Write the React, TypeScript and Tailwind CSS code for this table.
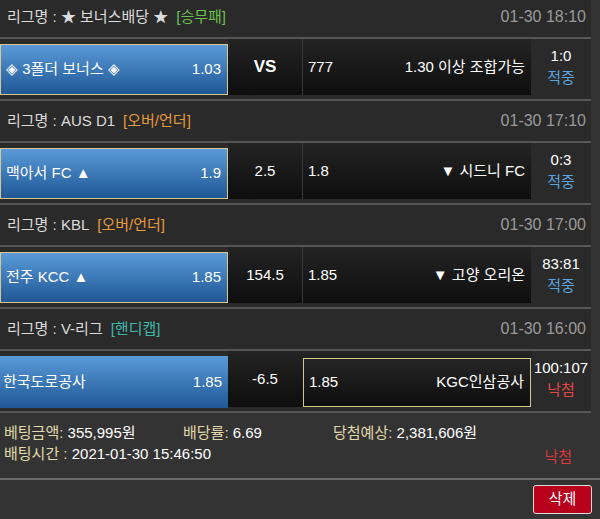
import React from "react";

type Match = {
  league: string;
  tag: string;
  tagColor: string;
  date: string;
  home: string;
  homeOdds: string;
  mid: string;
  midBold?: boolean;
  awayOdds: string;
  away: string;
  score: string;
  result: string;
  win: boolean;
  pick: "home" | "away";
};

const matches: Match[] = [
  {
    league: "★ 보너스배당 ★",
    tag: "[승무패]",
    tagColor: "text-[#6cc04a]",
    date: "01-30 18:10",
    home: "◈ 3폴더 보너스 ◈",
    homeOdds: "1.03",
    mid: "VS",
    midBold: true,
    awayOdds: "777",
    away: "1.30 이상 조합가능",
    score: "1:0",
    result: "적중",
    win: true,
    pick: "home",
  },
  {
    league: "AUS D1",
    tag: "[오버/언더]",
    tagColor: "text-[#e79a3c]",
    date: "01-30 17:10",
    home: "맥아서 FC ▲",
    homeOdds: "1.9",
    mid: "2.5",
    awayOdds: "1.8",
    away: "▼ 시드니 FC",
    score: "0:3",
    result: "적중",
    win: true,
    pick: "home",
  },
  {
    league: "KBL",
    tag: "[오버/언더]",
    tagColor: "text-[#e79a3c]",
    date: "01-30 17:00",
    home: "전주 KCC ▲",
    homeOdds: "1.85",
    mid: "154.5",
    awayOdds: "1.85",
    away: "▼ 고양 오리온",
    score: "83:81",
    result: "적중",
    win: true,
    pick: "home",
  },
  {
    league: "V-리그",
    tag: "[핸디캡]",
    tagColor: "text-[#3fb8ac]",
    date: "01-30 16:00",
    home: "한국도로공사",
    homeOdds: "1.85",
    mid: "-6.5",
    awayOdds: "1.85",
    away: "KGC인삼공사",
    score: "100:107",
    result: "낙첨",
    win: false,
    pick: "away",
  },
];

function Section({ m }: { m: Match }) {
  const homePicked = m.pick === "home";
  return (
    <div className="w-[591px] bg-[#2a2a2a] border-t-2 border-[#565656]">
      <div className="h-[42px] flex items-center justify-between pl-[7px] pr-[5px] border-b-2 border-[#565656]">
        <div className="text-[15px] text-[#dcdcdc] flex items-center">
          <span>리그명 : {m.league}</span>
          <span className={`ml-[8px] ${m.tagColor}`}>{m.tag}</span>
        </div>
        <div className="text-[16px] text-[#9a9a9a]">{m.date}</div>
      </div>
      <div className="h-[60px] flex items-start">
        {homePicked ? (
          <div className="mt-[5px] h-[51px] w-[228px] flex items-center justify-between pl-[5px] pr-[6px] border border-[#d6c78e] bg-gradient-to-b from-[#5a9ad9] to-[#1f5895] text-white text-[15px]">
            <span>{m.home}</span>
            <span>{m.homeOdds}</span>
          </div>
        ) : (
          <div className="mt-[5px] h-[52px] w-[228px] flex items-center justify-between pl-[3px] pr-[6px] bg-gradient-to-b from-[#5a9ad9] to-[#1f5895] text-white text-[15px]">
            <span>{m.home}</span>
            <span>{m.homeOdds}</span>
          </div>
        )}
        <div
          className={`h-[56px] w-[74px] flex items-center justify-center bg-gradient-to-b from-[#242424] to-[#0e0e0e] text-white ${
            m.midBold ? "font-bold text-[17px]" : "text-[15px]"
          }`}
        >
          {m.mid}
        </div>
        {homePicked ? (
          <div className="h-[56px] w-[229px] flex items-center justify-between pl-[5px] pr-[6px] border-l border-[#3a3a3a] bg-gradient-to-b from-[#242424] to-[#0e0e0e] text-white text-[15px]">
            <span>{m.awayOdds}</span>
            <span>{m.away}</span>
          </div>
        ) : (
          <div className="h-[56px] w-[229px] flex items-start bg-gradient-to-b from-[#242424] to-[#0e0e0e]">
            <div className="mt-[7px] ml-[1px] h-[49px] w-[228px] flex items-center justify-between pl-[5px] pr-[6px] border border-[#d6c78e] bg-gradient-to-b from-[#262626] to-[#0e0e0e] text-white text-[15px]">
              <span>{m.awayOdds}</span>
              <span>{m.away}</span>
            </div>
          </div>
        )}
        <div className="h-[56px] flex-1 flex flex-col items-center justify-center text-[15px] leading-[22px]">
          <span className="text-white whitespace-nowrap">{m.score}</span>
          <span className={m.win ? "text-[#5aa2de]" : "text-[#e04848]"}>{m.result}</span>
        </div>
      </div>
    </div>
  );
}

export default function App() {
  return (
    <div className="w-[600px] h-[519px] overflow-hidden bg-[#333333] font-['Liberation_Sans','Noto_Sans_CJK_KR',sans-serif]">
      <div className="-mt-[5px]">
        {matches.map((m, i) => (
          <Section key={i} m={m} />
        ))}
      </div>
      <div className="border-t-2 border-[#565656] w-[591px]" />
      <div className="px-[4px] pt-[9px] text-[15px] leading-[21px]">
        <div className="flex">
          <span className="w-[179px]">
            <span className="text-[#e2d9ac]">베팅금액: </span>
            <span className="text-white">355,995원</span>
          </span>
          <span className="w-[150px]">
            <span className="text-[#e2d9ac]">배당률: </span>
            <span className="text-white">6.69</span>
          </span>
          <span>
            <span className="text-[#e2d9ac]">당첨예상: </span>
            <span className="text-white">2,381,606원</span>
          </span>
        </div>
        <div className="flex items-end justify-between">
          <span>
            <span className="text-[#e2d9ac]">배팅시간 : </span>
            <span className="text-white">2021-01-30 15:46:50</span>
          </span>
          <span className="text-[#d8383a] mr-[24px] translate-y-[3px]">낙첨</span>
        </div>
      </div>
      <div className="mt-[14px] border-t-2 border-[#6a6a6a]" />
      <div className="flex justify-end pr-[8px] pt-[5px]">
        <button className="w-[59px] h-[29px] rounded-[3px] border border-[#d9d9d9] bg-[#b8001c] text-white text-[15px] flex items-center justify-center">
          삭제
        </button>
      </div>
    </div>
  );
}
